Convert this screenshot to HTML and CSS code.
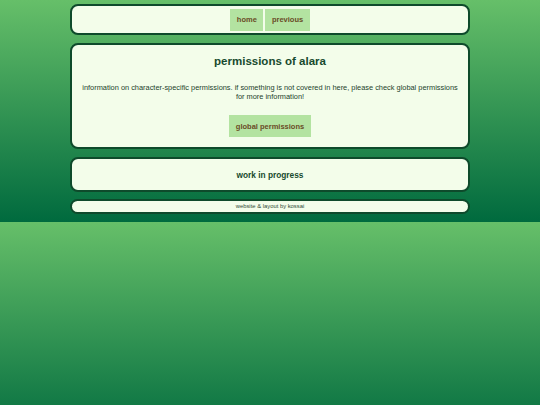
FILE: index.html
```html
<!DOCTYPE html>
<html>
<head>
<meta charset="utf-8">
<link rel="stylesheet" href="styles.css">
</head>
<body>
<div class="wrap">
  <nav class="box nav">
    <a class="btn" href="#">home</a>
    <a class="btn" href="#">previous</a>
  </nav>
  <main class="box main">
    <h1 class="title">permissions of alara</h1>
    <p class="intro">information on character-specific permissions. if something is not covered in here, please check global permissions for more information!</p>
    <a class="btn big" href="#">global permissions</a>
  </main>
  <section class="box wip">
    <h2 class="wip-title">work in progress</h2>
  </section>
  <footer class="box foot">website &amp; layout by kossai</footer>
</div>
</body>
</html>
```
FILE: styles.css
```css
html { background: linear-gradient(to bottom, #66bf69, #006a3e); }
body {
  margin: 0;
  font-family: "Liberation Sans", Arial, sans-serif;
  color: #15452c;
}
.wrap {
  width: 400px;
  margin: 0 auto;
  padding: 4px 0 0;
  display: flow-root;
}
.box {
  box-sizing: border-box;
  background: #f3fdea;
  border: 2px solid #0e4a2b;
  border-radius: 8px;
  margin-bottom: 8px;
  text-align: center;
}
.nav {
  height: 31px;
  display: flex;
  justify-content: center;
  align-items: center;
  gap: 2px;
}
.btn {
  display: inline-flex;
  align-items: center;
  justify-content: center;
  height: 22px;
  padding: 0 6.5px;
  background: #b3e3a1;
  color: #6a4b26;
  font-size: 7.5px;
  font-weight: bold;
  text-decoration: none;
}
.main {
  height: 106px;
  padding-top: 9px;
}
.title {
  margin: 0;
  font-size: 11.5px;
  line-height: 14px;
  color: #174a2e;
}
.intro {
  margin: 14.5px 0 0;
  padding: 0 6px;
  font-size: 7.4px;
  line-height: 9px;
  color: #1b3f2a;
}
.btn.big { margin-top: 14.5px; padding: 0 7px; }
.wip {
  height: 35px;
  margin-bottom: 7px;
  display: flex;
  align-items: center;
  justify-content: center;
}
.wip-title {
  margin: 0;
  font-size: 8.3px;
  color: #174a2e;
}
.foot {
  height: 15px;
  font-size: 5.85px;
  line-height: 11px;
  color: #2e4a36;
}
```
